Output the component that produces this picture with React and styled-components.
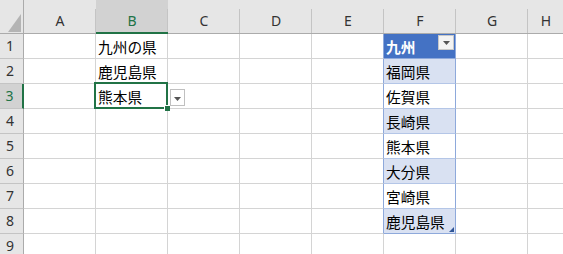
import React from "react";
import styled, { createGlobalStyle } from "styled-components";

const GlobalStyle = createGlobalStyle`
  html, body { margin: 0; padding: 0; background: #fff; overflow: hidden; }
  * { box-sizing: border-box; }
`;

const COLS = ["A", "B", "C", "D", "E", "F", "G", "H"];
const SELECTED_COL = "B";
const SELECTED_ROW = 3;
const ACTIVE_CELL = "B3";

const cellData = {
  B1: "九州の県",
  B2: "鹿児島県",
  B3: "熊本県",
};

const tableHead = "九州";
const tableRows = ["福岡県", "佐賀県", "長崎県", "熊本県", "大分県", "宮崎県", "鹿児島県"];

const Sheet = styled.div`
  display: grid;
  grid-template-columns: 24px repeat(7, 72px) 36px;
  grid-template-rows: 34px repeat(9, 25px);
  width: 563px;
  height: 254px;
  overflow: hidden;
  background: #fff;
`;

const Corner = styled.div`
  display: flex;
  align-items: flex-end;
  justify-content: flex-end;
  padding: 0 2px 1px 0;
  background: #e6e6e6;
  border-bottom: 1px solid #ababab;
  border-right: 1px solid #ababab;
`;

const ColHeader = styled.div`
  position: relative;
  display: flex;
  align-items: center;
  justify-content: center;
  padding-top: 9px;
  background: ${(p) => (p.$selected ? "#d2d2d2" : "#e6e6e6")};
  border-bottom: ${(p) => (p.$selected ? "2px solid #217346" : "1px solid #ababab")};
  color: ${(p) => (p.$selected ? "#217346" : "#333")};
  font: 14px/1 "Noto Sans", "DejaVu Sans", sans-serif;
  &::after {
    content: "";
    position: absolute;
    right: 0;
    top: 9px;
    bottom: 0;
    width: 1px;
    background: #c4c4c4;
  }
`;

const RowHeader = styled.div`
  display: flex;
  align-items: center;
  justify-content: center;
  padding-right: 3px;
  background: ${(p) => (p.$selected ? "#d2d2d2" : "#e6e6e6")};
  border-right: ${(p) => (p.$selected ? "2px solid #217346" : "1px solid #ababab")};
  border-bottom: 1px solid #c4c4c4;
  color: ${(p) => (p.$selected ? "#217346" : "#333")};
  font: 14px/1 "Noto Sans", "DejaVu Sans", sans-serif;
`;

const Cell = styled.div`
  position: relative;
  z-index: ${(p) => (p.$active ? 2 : "auto")};
  display: flex;
  align-items: center;
  padding-left: 2px;
  white-space: nowrap;
  background: #fff;
  border-right: 1px solid ${(p) => (p.$tableEdge ? "#8ea9db" : "#d4d4d4")};
  border-bottom: 1px solid #d4d4d4;
  color: #000;
  font: 14.7px "Noto Sans CJK JP", "Noto Sans", sans-serif;
`;

const TableCell = styled(Cell)`
  background: ${(p) => (p.$head ? "#4472c4" : p.$band ? "#d9e1f2" : "#fff")};
  color: ${(p) => (p.$head ? "#fff" : "#000")};
  font-weight: ${(p) => (p.$head ? 700 : 400)};
  border-right: 1px solid #8ea9db;
  border-bottom: 1px solid ${(p) => (p.$last || p.$head ? "#8ea9db" : "#b4c6e7")};
`;

/* overlays drawn on top of their own cell */
const FilterButton = styled.div`
  position: absolute;
  right: 1px;
  top: 1px;
  width: 16px;
  height: 15px;
  background: #f3f3f3;
  border: 1px solid #c8c8c8;
  display: flex;
  align-items: center;
  justify-content: center;
`;

const ResizeHandle = styled.svg`
  position: absolute;
  right: 1px;
  bottom: 1px;
`;

const SelectionFrame = styled.div`
  position: absolute;
  inset: -2px -1px -1px -2px;
  border: 2px solid #217346;
  pointer-events: none;
`;

const FillHandle = styled.div`
  position: absolute;
  right: -3px;
  bottom: -3px;
  width: 6px;
  height: 6px;
  background: #217346;
  border-top: 1px solid #fff;
  border-left: 1px solid #fff;
`;

const ValidationButton = styled.div`
  position: absolute;
  right: -18px;
  top: 5px;
  width: 15px;
  height: 17px;
  background: #fff;
  border: 1px solid #c0c0c0;
  display: flex;
  align-items: center;
  justify-content: center;
  padding-top: 2px;
`;

const DownArrow = () => (
  <svg width="7" height="4" viewBox="0 0 7 4">
    <path d="M0 0 H7 L3.5 4 Z" fill="#555" />
  </svg>
);

const SelectAllMark = () => (
  <svg width="13" height="18" viewBox="0 0 13 18">
    <path d="M13 0 V18 H0 Z" fill="#b4b4b4" />
  </svg>
);

export default function App() {
  const rows = Array.from({ length: 9 }, (_, i) => i + 1);
  return (
    <>
      <GlobalStyle />
      <Sheet>
        <Corner>
          <SelectAllMark />
        </Corner>
        {COLS.map((c) => (
          <ColHeader key={c} $selected={c === SELECTED_COL}>
            {c}
          </ColHeader>
        ))}
        {rows.map((r) => (
          <React.Fragment key={r}>
            <RowHeader $selected={r === SELECTED_ROW}>{r}</RowHeader>
            {COLS.map((c) => {
              if (c === "F" && r <= 8) {
                const head = r === 1;
                const text = head ? tableHead : tableRows[r - 2];
                return (
                  <TableCell key={c} $head={head} $band={r % 2 === 0} $last={r === 8}>
                    {text}
                    {head && (
                      <FilterButton>
                        <DownArrow />
                      </FilterButton>
                    )}
                    {r === 8 && (
                      <ResizeHandle width="5" height="5" viewBox="0 0 5 5">
                        <path d="M5 0 V5 H0 Z" fill="#2f5597" />
                      </ResizeHandle>
                    )}
                  </TableCell>
                );
              }
              const id = c + r;
              const active = id === ACTIVE_CELL;
              return (
                <Cell key={c} $active={active} $tableEdge={c === "E" && r <= 8}>
                  {cellData[id] || ""}
                  {active && (
                    <>
                      <SelectionFrame />
                      <FillHandle />
                      <ValidationButton>
                        <DownArrow />
                      </ValidationButton>
                    </>
                  )}
                </Cell>
              );
            })}
          </React.Fragment>
        ))}
      </Sheet>
    </>
  );
}
